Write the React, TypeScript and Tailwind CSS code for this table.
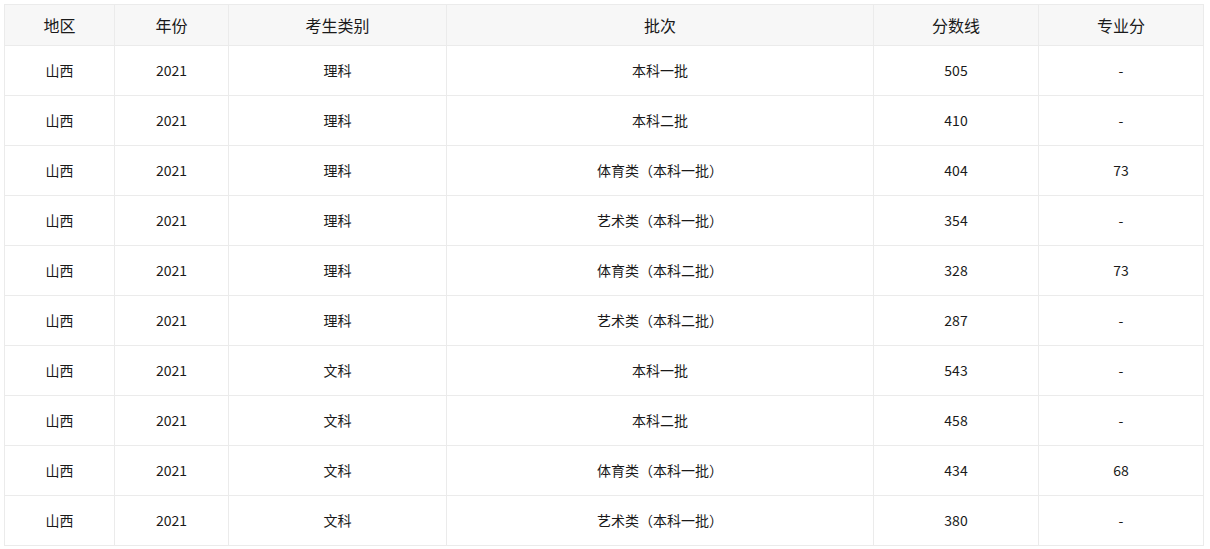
import React from "react";

const rows: string[][] = [
  ["山西", "2021", "理科", "本科一批", "505", "-"],
  ["山西", "2021", "理科", "本科二批", "410", "-"],
  ["山西", "2021", "理科", "体育类（本科一批）", "404", "73"],
  ["山西", "2021", "理科", "艺术类（本科一批）", "354", "-"],
  ["山西", "2021", "理科", "体育类（本科二批）", "328", "73"],
  ["山西", "2021", "理科", "艺术类（本科二批）", "287", "-"],
  ["山西", "2021", "文科", "本科一批", "543", "-"],
  ["山西", "2021", "文科", "本科二批", "458", "-"],
  ["山西", "2021", "文科", "体育类（本科一批）", "434", "68"],
  ["山西", "2021", "文科", "艺术类（本科一批）", "380", "-"],
];

const headers = ["地区", "年份", "考生类别", "批次", "分数线", "专业分"];
const widths = ["w-[110px]", "w-[114px]", "w-[218px]", "w-[427px]", "w-[165px]", "w-[165px]"];

export default function App() {
  return (
    <div className="p-1 bg-white" style={{ fontFamily: '"Noto Sans CJK SC", "Noto Sans", sans-serif' }}>
      <table className="border-collapse w-[1200px] table-fixed text-[#1a1a1a]">
        <colgroup>
          {widths.map((w, i) => (
            <col key={i} className={w} />
          ))}
        </colgroup>
        <thead>
          <tr className="h-[41px] bg-[#f7f7f7]">
            {headers.map((h, i) => (
              <th key={i} className="border border-[#ebebeb] font-normal text-[16px] text-center p-0">
                {h}
              </th>
            ))}
          </tr>
        </thead>
        <tbody>
          {rows.map((r, ri) => (
            <tr key={ri} className="h-[50px]">
              {r.map((c, ci) => (
                <td key={ci} className="border border-[#ebebeb] text-[14px] text-center p-0">
                  {c}
                </td>
              ))}
            </tr>
          ))}
        </tbody>
      </table>
    </div>
  );
}
